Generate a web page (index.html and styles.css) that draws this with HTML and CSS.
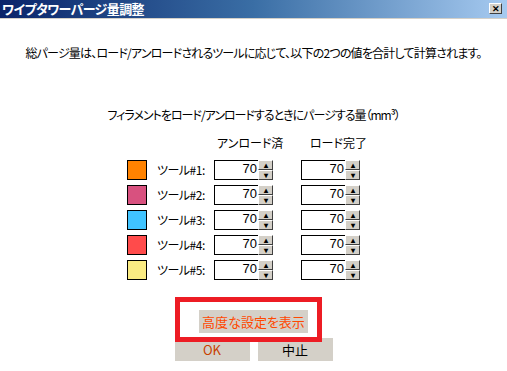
FILE: index.html
```html
<!DOCTYPE html>
<html lang="ja">
<head>
  <meta charset="UTF-8" />
  <title>ワイプタワーパージ量調整</title>
  <link rel="stylesheet" href="styles.css">
</head>
<body>
  <div class="window">
    <div class="titlebar">
      <span class="title">ワイプタワーパージ量調整</span>
      <span class="close">✕</span>
    </div>

    <p class="intro">総パージ量は、ロード/アンロードされるツールに応じて、以下の2つの値を合計して計算されます。</p>
    <p class="subtitle">フィラメントをロード/アンロードするときにパージする量（mm³）</p>

    <div class="grid">
      <span></span><span></span>
      <span class="head">アンロード済</span>
      <span class="head">ロード完了</span>

      <span class="swatch c1"></span><span class="tool">ツール#1:</span>
      <div class="spin"><span class="val">70</span><span class="arrows"><b>▴</b><b>▾</b></span></div>
      <div class="spin"><span class="val">70</span><span class="arrows"><b>▴</b><b>▾</b></span></div>

      <span class="swatch c2"></span><span class="tool">ツール#2:</span>
      <div class="spin"><span class="val">70</span><span class="arrows"><b>▴</b><b>▾</b></span></div>
      <div class="spin"><span class="val">70</span><span class="arrows"><b>▴</b><b>▾</b></span></div>

      <span class="swatch c3"></span><span class="tool">ツール#3:</span>
      <div class="spin"><span class="val">70</span><span class="arrows"><b>▴</b><b>▾</b></span></div>
      <div class="spin"><span class="val">70</span><span class="arrows"><b>▴</b><b>▾</b></span></div>

      <span class="swatch c4"></span><span class="tool">ツール#4:</span>
      <div class="spin"><span class="val">70</span><span class="arrows"><b>▴</b><b>▾</b></span></div>
      <div class="spin"><span class="val">70</span><span class="arrows"><b>▴</b><b>▾</b></span></div>

      <span class="swatch c5"></span><span class="tool">ツール#5:</span>
      <div class="spin"><span class="val">70</span><span class="arrows"><b>▴</b><b>▾</b></span></div>
      <div class="spin"><span class="val">70</span><span class="arrows"><b>▴</b><b>▾</b></span></div>
    </div>

    <div class="advanced">
      <button class="btn adv">高度な設定を表示</button>
      <span class="highlight"></span>
    </div>

    <div class="actions">
      <button class="btn ok">OK</button>
      <button class="btn">中止</button>
    </div>
  </div>
</body>
</html>
```

FILE: styles.css
```css
* {
  box-sizing: border-box;
}

body {
  margin: 0;
  font-family: "Noto Sans CJK JP", "Liberation Sans", sans-serif;
  font-size: 12px;
  font-feature-settings: "palt";
  color: #000;
  background: #fff;
}

.window {
  width: 507px;
  height: 371px;
  background: #fff;
  overflow: hidden;
}

.titlebar {
  height: 19px;
  display: flex;
  align-items: center;
  justify-content: space-between;
  padding: 0 5px 1px 2px;
  background: linear-gradient(to right, #0a246a, #3a6ea5 50%, #a6caf0);
  border-bottom: 1px solid #d4d0c8;
}

.title {
  color: #fff;
  font-weight: bold;
  font-size: 13px;
  line-height: 16px;
  letter-spacing: -0.6px;
}

.close {
  width: 13px;
  height: 11px;
  display: flex;
  align-items: center;
  justify-content: center;
  font-size: 9px;
  font-weight: bold;
  line-height: 1;
  background: #d4d0c8;
  border: 1px solid;
  border-color: #fff #404040 #404040 #fff;
}

.intro {
  margin: 26px 0 0;
  text-align: center;
  line-height: 16px;
  letter-spacing: -0.8px;
}

.subtitle {
  margin: 46px 0 0;
  text-align: center;
  line-height: 16px;
  letter-spacing: -1px;
}

.grid {
  display: grid;
  grid-template-columns: 20px 47px 59px 77px;
  column-gap: 10px;
  row-gap: 5px;
  margin: 12px 0 0 127px;
  width: max-content;
}

.grid > :nth-child(4n) {
  justify-self: end;
  width: 59px;
}

.head {
  line-height: 16px;
  margin-bottom: 4px;
  padding-left: 3px;
  white-space: nowrap;
}

.grid > .head:nth-child(4) {
  justify-self: start;
  width: auto;
  padding-left: 27px;
}

.swatch {
  width: 20px;
  height: 20px;
  border: 1px solid #000;
}

.c1 { background: #ff8200; }
.c2 { background: #d8517f; }
.c3 { background: #40c4ff; }
.c4 { background: #ff4b4b; }
.c5 { background: #faeb82; }

.tool {
  line-height: 20px;
  white-space: nowrap;
  letter-spacing: -0.5px;
}

.spin {
  display: flex;
  align-items: flex-start;
  height: 20px;
}

.val {
  width: 44px;
  height: 20px;
  border: 1px solid #000;
  border-right: 0;
  text-align: right;
  line-height: 16px;
  padding-right: 1px;
  font-family: "Liberation Sans", sans-serif;
  font-size: 13px;
}

.arrows {
  width: 15px;
  height: 16px;
  display: flex;
  flex-direction: column;
}

.arrows b {
  flex: 1;
  display: flex;
  align-items: center;
  justify-content: center;
  font-size: 8px;
  line-height: 1;
  background: #d4d0c8;
  border: 1px solid;
  border-color: #fff #404040 #404040 #fff;
}

.advanced {
  position: relative;
  display: flex;
  justify-content: center;
  margin-top: 30px;
}

.btn {
  font-family: inherit;
  font-size: 13px;
  font-feature-settings: "palt";
  height: 23px;
  padding: 0;
  border: none;
  background: #d4d0c8;
  color: #000;
}

.adv {
  width: 109px;
  color: #ff4800;
}

.highlight {
  position: absolute;
  left: 175px;
  top: -13px;
  width: 147px;
  height: 45px;
  border: 5px solid #ed1c24;
}

.actions {
  display: flex;
  justify-content: center;
  gap: 8px;
  margin-top: 5px;
}

.actions .btn {
  width: 75px;
}

.ok {
  color: #c84000;
}
```
